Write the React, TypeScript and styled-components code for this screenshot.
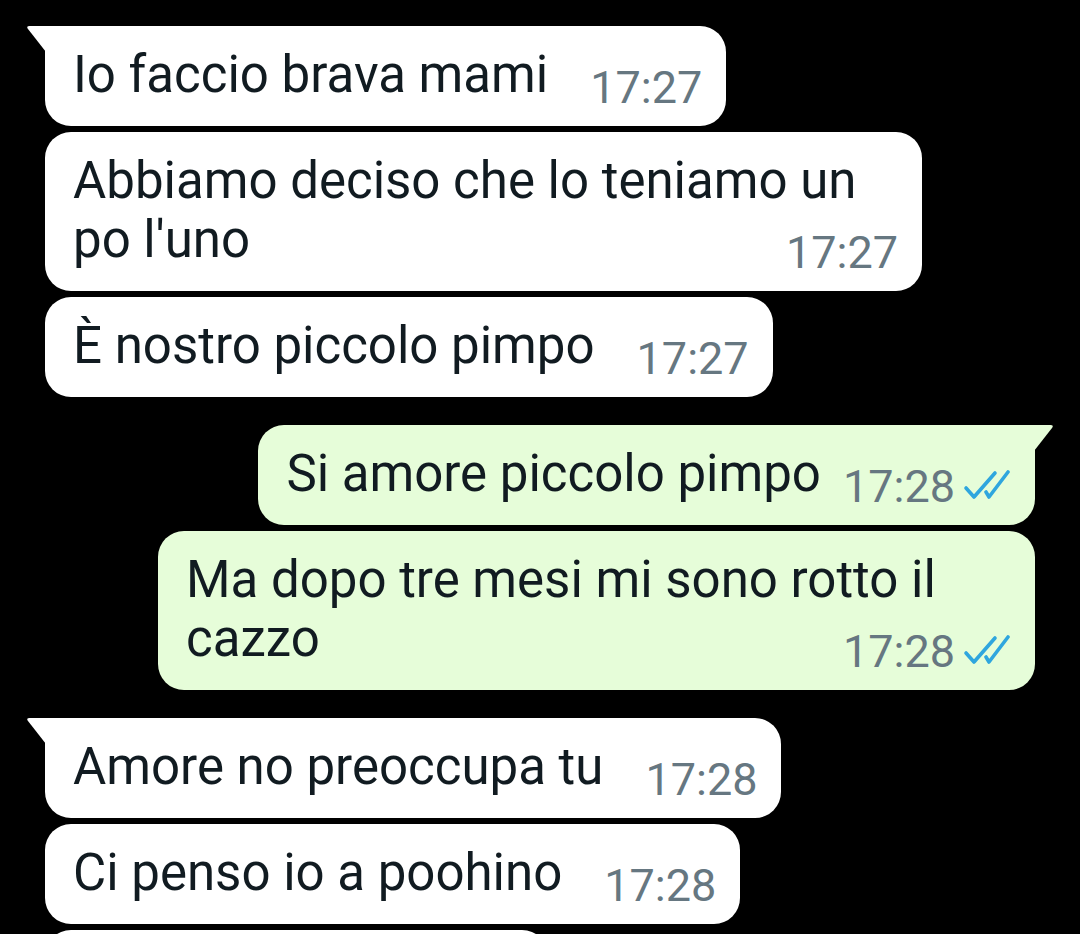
import styled, { createGlobalStyle } from "styled-components";

const GlobalStyle = createGlobalStyle`
  html, body {
    margin: 0;
    height: 934px;
    overflow: hidden;
    background: #000;
  }
  body {
    font-family: Roboto, "Noto Sans", "Liberation Sans", sans-serif;
  }
`;

const Chat = styled.div`
  display: flex;
  flex-direction: column;
  gap: 28px;
  padding: 26px 45px 0;
`;

const Group = styled.div<{ $out?: boolean }>`
  display: flex;
  flex-direction: column;
  gap: 6px;
  align-items: ${(p) => (p.$out ? "flex-end" : "flex-start")};
`;

const Bubble = styled.div<{ $out?: boolean; $tail?: boolean }>`
  position: relative;
  display: flow-root;
  box-sizing: border-box;
  max-width: 877px;
  padding: 19px 24px 13px 28px;
  background: ${(p) => (p.$out ? "#e6fdd9" : "#ffffff")};
  color: #111b21;
  font-size: 51px;
  line-height: 59px;
  border-radius: 26px;
  ${(p) => p.$tail && !p.$out && "border-top-left-radius: 0;"}
  ${(p) => p.$tail && p.$out && "border-top-right-radius: 0;"}
`;

const Tail = styled.svg<{ $out?: boolean }>`
  position: absolute;
  top: 0;
  width: 20px;
  height: 26px;
  ${(p) => (p.$out ? "right: -19px; transform: scaleX(-1);" : "left: -19px;")}
  fill: ${(p) => (p.$out ? "#e6fdd9" : "#ffffff")};
`;

const Meta = styled.span<{ $out?: boolean }>`
  float: right;
  display: inline-flex;
  align-items: center;
  margin: 18px 0 0 ${(p) => (p.$out ? 22 : 42)}px;
  font-size: 45px;
  line-height: 50px;
  color: #667781;
`;

const Ticks = styled.svg`
  width: 48px;
  height: 30px;
  margin: 0 0 4px 8px;
  stroke: #2fa6de;
  stroke-width: 3.6;
  stroke-linecap: round;
  stroke-linejoin: round;
  fill: none;
`;

type Msg = { text: string; time: string; out?: boolean };

const groups: Msg[][] = [
  [
    { text: "Io faccio brava mami", time: "17:27" },
    { text: "Abbiamo deciso che lo teniamo un po l'uno", time: "17:27" },
    { text: "È nostro piccolo pimpo", time: "17:27" },
  ],
  [
    { text: "Si amore piccolo pimpo", time: "17:28", out: true },
    { text: "Ma dopo tre mesi mi sono rotto il cazzo", time: "17:28", out: true },
  ],
  [
    { text: "Amore no preoccupa tu", time: "17:28" },
    { text: "Ci penso io a poohino", time: "17:28" },
    { text: "Va bene amo", time: "17:28" },
  ],
];

const Message = ({ text, time, out, tail }: Msg & { tail: boolean }) => (
  <Bubble $out={out} $tail={tail}>
    {tail && (
      <Tail $out={out} viewBox="0 0 20 26">
        <path d="M20 0H3.5Q0 0 1.8 2.8L20 26Z" />
      </Tail>
    )}
    {text}
    <Meta $out={out}>
      {time}
      {out && (
        <Ticks viewBox="0 0 48 30">
          <path d="M3 18L11 27L32 3" />
          <path d="M23 22L26 27L45 2" />
        </Ticks>
      )}
    </Meta>
  </Bubble>
);

const App = () => {
  return (
    <>
      <GlobalStyle />
      <Chat>
        {groups.map((group, gi) => (
          <Group key={gi} $out={group[0].out}>
            {group.map((msg, i) => (
              <Message key={i} {...msg} tail={i === 0} />
            ))}
          </Group>
        ))}
      </Chat>
    </>
  );
};

export default App;
